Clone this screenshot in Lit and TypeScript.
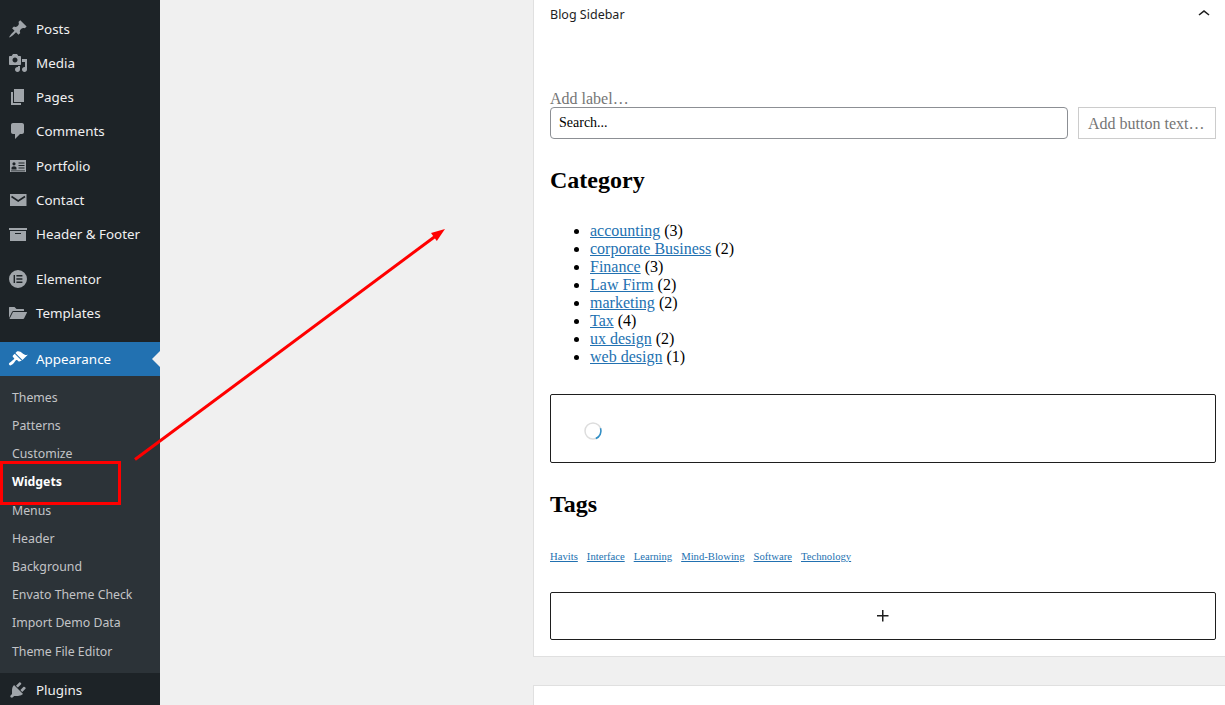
import { LitElement, html, css, svg } from "lit";
import { customElement } from "lit/decorators.js";

const ICONS: Record<string, unknown> = {
  post: svg`<path d="M10.44 3.02l1.82-1.82 6.36 6.35-1.83 1.82c-1.05-.68-2.48-.57-3.41.36l-.75.75c-.92.93-1.04 2.35-.35 3.41l-1.83 1.82-2.41-2.41-2.8 2.79c-.42.42-3.38 2.71-3.8 2.29s1.86-3.39 2.28-3.81l2.79-2.79L4.1 9.36l1.83-1.82c1.05.69 2.48.57 3.4-.36l.75-.75c.93-.92 1.05-2.35.36-3.41z"/>`,
  media: svg`<path d="M13 11V4c0-.55-.45-1-1-1h-1.67L9 1H5L3.67 3H2c-.55 0-1 .45-1 1v7c0 .55.45 1 1 1h10c.55 0 1-.45 1-1zM7 4.5c1.38 0 2.5 1.12 2.5 2.5S8.38 9.5 7 9.5 4.5 8.38 4.5 7 5.62 4.5 7 4.5zM14 6h5v10.5c0 1.38-1.12 2.5-2.5 2.5S14 17.88 14 16.5s1.12-2.5 2.5-2.5c.17 0 .34.02.5.05V9h-3V6zm-4 8.05V13h2v3.5c0 1.38-1.12 2.5-2.5 2.5S7 17.88 7 16.5 8.12 14 9.5 14c.17 0 .34.02.5.05z"/>`,
  page: svg`<path d="M6 15V2h10v13H6zm-1 1h8v2H3V5h2v11z"/>`,
  comments: svg`<path d="M5 2h9c1.1 0 2 .9 2 2v7c0 1.1-.9 2-2 2h-2l-5 5v-5H5c-1.1 0-2-.9-2-2V4c0-1.1.9-2 2-2z"/>`,
  portfolio: svg`<path fill-rule="evenodd" d="M2 4h16v12H2zM6 6.2a1.6 1.6 0 1 0 0 3.2 1.6 1.6 0 0 0 0-3.2zM3.5 13.5h5v-1.4c0-1-1.2-1.8-2.5-1.8s-2.5.8-2.5 1.8zM10.5 6.5v1h6v-1zM10.5 9v1h6V9zM10.5 11.5v1h6v-1zM3 14.4v.8h14v-.8z"/>`,
  contact: svg`<path d="M2 4h16.5v12H2z"/><path d="M3.5 6.5L10.2 11 17 6.5" fill="none" stroke="#1d2327" stroke-width="1.6"/>`,
  archive: svg`<path d="M19 4v2H1V4h18zM2 7h16v10H2V7zm11 3V9H7v1h6z"/>`,
  elementor: svg`<path fill-rule="evenodd" d="M10 1a9 9 0 1 0 0 18 9 9 0 0 0 0-18zM7 6v8H5.6V6zM14.4 6v1.5H8.4V6zM14.4 9.2v1.5H8.4V9.2zM14.4 12.5V14H8.4v-1.5z"/>`,
  folder: svg`<path d="M1 15V4.5c0-.3.2-.5.5-.5h5l2 2h7c.3 0 .5.2.5.5V8H5.5c-.6 0-1.1.3-1.4.8z"/><path d="M5 9h13.5c.4 0 .6.4.4.8L16 15.5c-.2.3-.5.5-.8.5H1.5z"/>`,
  appearance: svg`<path d="M14.48 11.06L7.41 3.99l1.5-1.5c.5-.56 2.3-.47 3.51.32 1.21.8 1.43 1.28 2.91 2.1 1.18.64 2.45 1.26 4.45.85zm-.71.71L6.7 4.7 4.93 6.47c-.39.39-.39 1.02 0 1.41l1.06 1.06c.39.39.39 1.03 0 1.42-.6.6-1.43 1.11-2.21 1.69-.35.26-.7.53-1.01.84C1.43 13.23.4 14.85 1.05 15.5l.71.71c.65.65 2.27-.38 3.62-1.73.31-.31.58-.66.84-1.01.58-.78 1.09-1.61 1.69-2.21.39-.39 1.03-.39 1.42 0l1.06 1.06c.39.39 1.02.39 1.41 0z"/>`,
  plugins: svg`<path d="M13.11 4.36L9.87 7.6 8 5.72l3.24-3.24c.35-.34 1.05-.2 1.56.32.52.51.66 1.21.31 1.56zm-8 1.77l.91-1.12 9.01 9.01-1.19.84c-.71.71-2.63 1.16-3.82 1.16H6.14L4.9 17.26c-.59.59-1.54.59-2.12 0-.59-.58-.59-1.53 0-2.12l1.24-1.24v-3.88c0-1.13.4-3.19 1.09-3.89zm7.26 3.97l3.24-3.24c.34-.35 1.04-.21 1.55.31.52.51.66 1.21.31 1.55l-3.24 3.25z"/>`,
};

const item = (icon: string, label: string) => html`
  <a class="item">
    <svg class="ico" viewBox="0 0 20 20" width="20" height="20">${ICONS[icon]}</svg>
    <span>${label}</span>
  </a>`;

const SUB = ["Themes", "Patterns", "Customize", "Widgets", "Menus", "Header", "Background", "Envato Theme Check", "Import Demo Data", "Theme File Editor"];
const CATS: [string, number][] = [["accounting", 3], ["corporate Business", 2], ["Finance", 3], ["Law Firm", 2], ["marketing", 2], ["Tax", 4], ["ux design", 2], ["web design", 1]];
const TAGS = ["Havits", "Interface", "Learning", "Mind-Blowing", "Software", "Technology"];

@customElement("app-root")
export class AppRoot extends LitElement {
  static styles = css`
    :host { display: block; position: relative; width: 1225px; height: 705px; overflow: hidden; background: #f0f0f0; }
    .page { display: flex; height: 705px; overflow: hidden; }
    .side { width: 160px; flex: none; background: #1d2327; padding-top: 11.8px; box-sizing: border-box; font-family: "Noto Sans", sans-serif; }
    .item { display: flex; align-items: center; height: 34.2px; color: #f0f0f1; font-size: 13.4px; }
    .ico { margin-left: 8px; margin-right: 8px; fill: #a0a5aa; flex: none; }
    .gap1 { height: 10.4px; }
    .gap2 { height: 12px; }
    .active { position: relative; background: #2271b1; color: #fff; height: 34px; }
    .active .ico { fill: #fff; }
    .active::after { content: ""; position: absolute; right: 0; top: 9px; border: 8px solid transparent; border-right-color: #f0f0f0; border-left-width: 0; }
    .sub { background: #2c3338; padding: 7.4px 0 7.6px; }
    .sub a { display: flex; align-items: center; height: 28.2px; padding-left: 12px; font-size: 12.3px; color: #c3c4c7; }
    .sub a.cur { color: #fff; font-weight: 700; }
    .main { flex: 1; min-width: 0; padding-left: 373px; overflow: hidden; }
    .card { width: 700px; box-sizing: border-box; background: #fff; border: 1px solid #e0e0e0; padding: 0 16px; }
    .first { margin-top: -1px; height: 658px; }
    .second { margin-top: 28px; height: 60px; }
    .head { display: flex; align-items: center; justify-content: space-between; height: 28px; font-family: "Noto Sans", sans-serif; font-size: 12.5px; color: #1e1e1e; }
    .head svg { fill: #1e1e1e; display: block; }
    .body { font-family: "Liberation Serif", serif; font-size: 16px; color: #000; }
    .label { margin-top: 62px; height: 17px; line-height: 18px; color: #757575; }
    .row { display: flex; gap: 10px; }
    .input { width: 518px; height: 32px; box-sizing: border-box; border: 1px solid #8c8f94; border-radius: 4px; padding-left: 8px; display: flex; align-items: center; font-size: 14px; color: #000; }
    .btn { width: 138px; height: 32px; box-sizing: border-box; border: 1px solid #ccc; padding: 1px 0 0 9px; display: flex; align-items: center; color: #757575; }
    h2 { margin: 28px 0 0; font-size: 24px; line-height: 27px; font-weight: 700; color: #000; }
    ul { margin: 28px 0 0; padding: 0 0 0 40px; line-height: 18px; }
    a.lnk { color: #2271b1; text-decoration: underline; }
    .box { box-sizing: border-box; border: 1px solid #1e1e1e; border-radius: 2px; display: flex; align-items: center; }
    .load { margin-top: 28px; height: 69px; padding: 4px 0 0 32px; }
    .tags { display: flex; gap: 9px; margin-top: 30px; height: 16px; align-items: center; font-size: 10.67px; }
    .add { margin-top: 28px; height: 48px; justify-content: center; }
    .add svg { fill: #1e1e1e; display: block; }
    .ann { position: absolute; inset: 0; pointer-events: none; }
  `;

  render() {
    return html`
      <div class="page">
        <nav class="side">
          ${item("post", "Posts")}${item("media", "Media")}${item("page", "Pages")}${item("comments", "Comments")}
          ${item("portfolio", "Portfolio")}${item("contact", "Contact")}${item("archive", "Header & Footer")}
          <div class="gap1"></div>
          ${item("elementor", "Elementor")}${item("folder", "Templates")}
          <div class="gap2"></div>
          <a class="item active">
            <svg class="ico" viewBox="0 0 20 20" width="20" height="20">${ICONS.appearance}</svg>
            <span>Appearance</span>
          </a>
          <div class="sub">
            ${SUB.map((s) => html`<a class=${s === "Widgets" ? "cur" : ""}>${s}</a>`)}
          </div>
          ${item("plugins", "Plugins")}
        </nav>
        <main class="main">
          <section class="card first">
            <div class="head">
              <span>Blog Sidebar</span>
              <svg viewBox="0 0 24 24" width="24" height="24"><path d="M6.5 12.4L12 8l5.5 4.4-.9 1.2L12 10l-4.5 3.6-1-1.2z"/></svg>
            </div>
            <div class="body">
              <div class="label">Add label…</div>
              <div class="row">
                <div class="input">Search...</div>
                <div class="btn">Add button text…</div>
              </div>
              <h2>Category</h2>
              <ul>
                ${CATS.map(([n, c]) => html`<li><a class="lnk">${n}</a> (${c})</li>`)}
              </ul>
              <div class="box load">
                <svg viewBox="0 0 20 20" width="20" height="20">
                  <circle cx="10" cy="10" r="8" fill="none" stroke="#ddd" stroke-width="1.5"/>
                  <path d="M17.5 7.3A8 8 0 0 1 12.8 17.5" fill="none" stroke="#2f8fc7" stroke-width="1.5"/>
                </svg>
              </div>
              <h2>Tags</h2>
              <div class="tags">${TAGS.map((t) => html`<a class="lnk">${t}</a>`)}</div>
              <div class="box add">
                <svg viewBox="0 0 24 24" width="24" height="24"><path d="M11 12.5V17.5H12.5V12.5H17.5V11H12.5V6H11V11H6V12.5H11Z"/></svg>
              </div>
            </div>
          </section>
          <section class="card second"></section>
        </main>
      </div>
      <svg class="ann" viewBox="0 0 1225 705" width="1225" height="705">
        <rect x="1.5" y="462.5" width="118" height="41" fill="none" stroke="#ff0000" stroke-width="3"/>
        <line x1="135" y1="459.5" x2="435" y2="236.5" stroke="#ff0000" stroke-width="3"/>
        <polygon points="445,229 431,233 436.8,241" fill="#ff0000"/>
      </svg>
    `;
  }
}
